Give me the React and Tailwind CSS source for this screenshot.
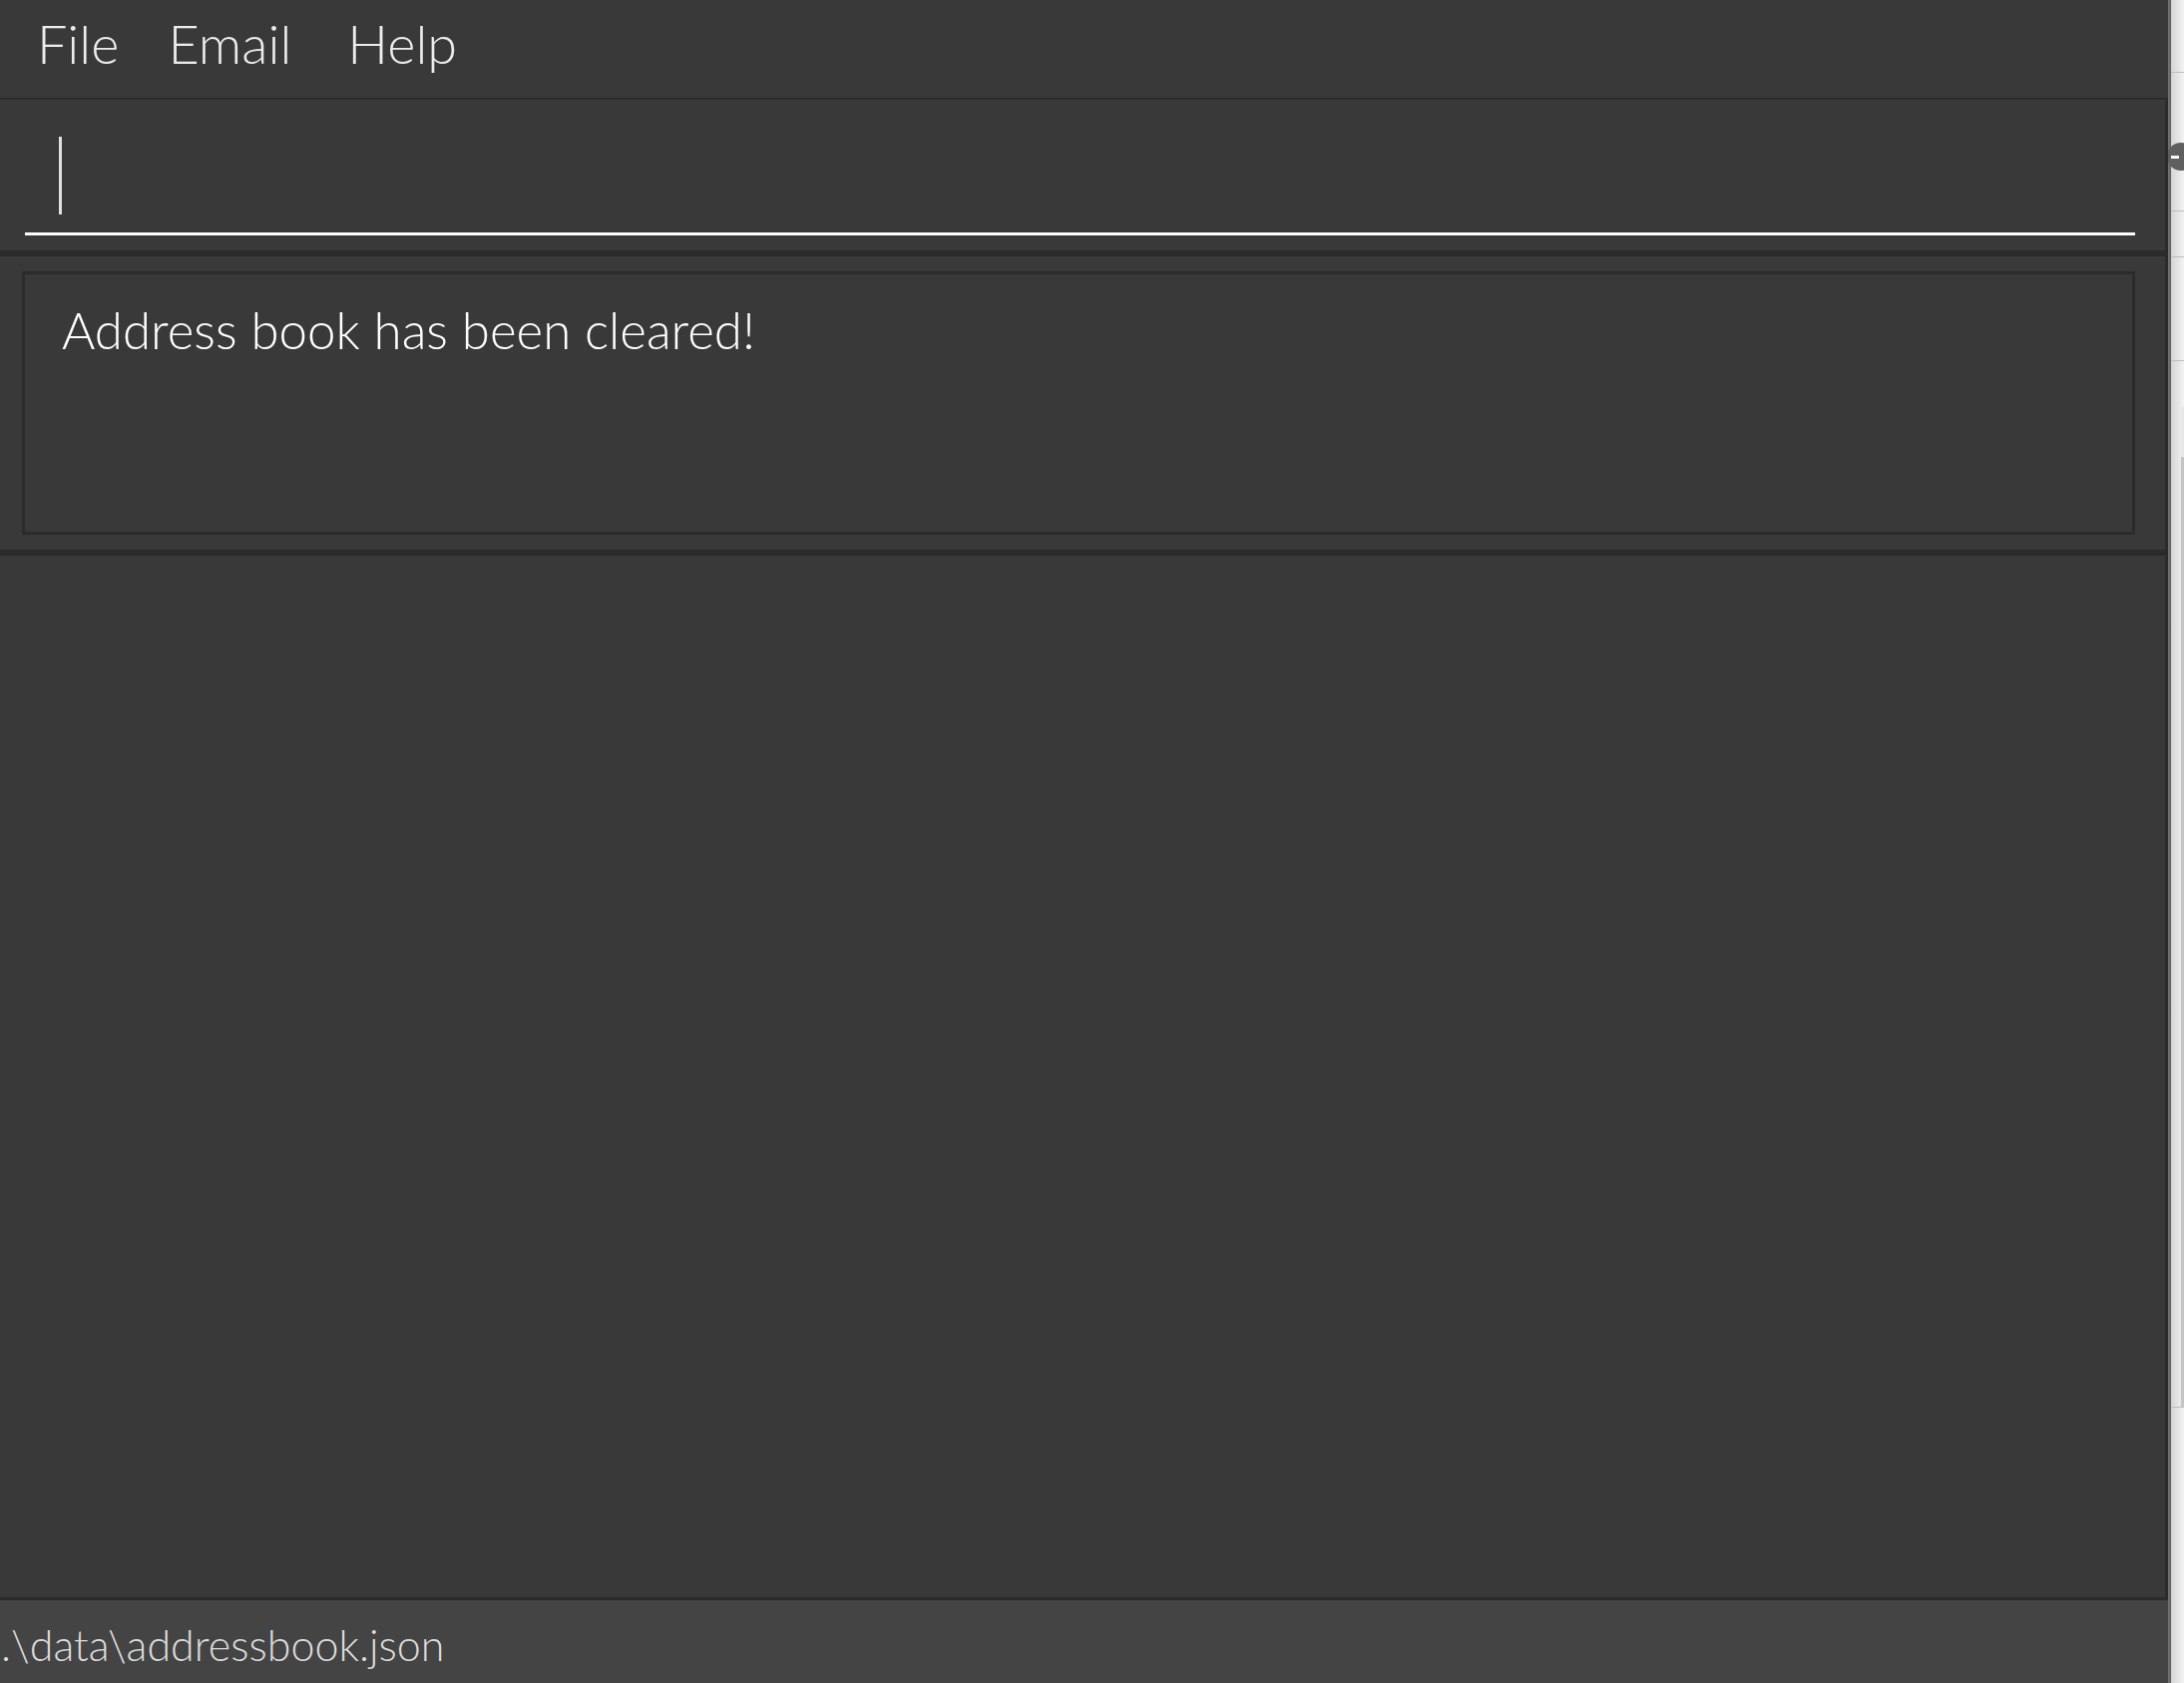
export default function App() {
  const font = { fontFamily: '"Lato", "Open Sans", sans-serif' };
  return (
    <div className="relative flex h-[1687px] w-[2189px] overflow-hidden bg-[#e6e6e6]" style={font}>
      <div className="flex w-[2173px] flex-col bg-[#393939]">
        {/* Menu bar */}
        <div className="flex h-[98px] items-start pl-[37px] pt-[17px] text-[54px] font-light leading-none text-[#ececec]">
          <span>File</span>
          <span className="ml-[49px]">Email</span>
          <span className="ml-[56px]">Help</span>
        </div>
        <div className="h-[2px] bg-[#2b2b2b]" />

        {/* Command box */}
        <div className="flex h-[151px] flex-col border-r-[3px] border-[#2b2b2b] pt-[37px]">
          <div className="ml-[59px] h-[78px] w-[3px] bg-[#e0e0e0]" />
          <div className="ml-[25px] mt-[18px] h-[3px] w-[2115px] bg-white" />
        </div>
        <div className="h-[6px] bg-[#2b2b2b]" />

        {/* Result display */}
        <div className="flex h-[294px] flex-col border-r-[3px] border-[#2b2b2b] pl-[22px] pt-[15px]">
          <div className="h-[264px] w-[2118px] border-[3px] border-[#2b2b2b] pl-[37px] pt-[30px]">
            <span className="text-[51px] font-light leading-none text-white">Address book has been cleared!</span>
          </div>
        </div>
        <div className="h-[6px] bg-[#2b2b2b]" />

        {/* List area */}
        <div className="flex-1 border-r-[3px] border-[#2b2b2b]" />
        <div className="h-[3px] bg-[#2b2b2b]" />

        {/* Status bar */}
        <div className="h-[83px] bg-[#444444] pl-[1px] pt-[23px] text-[43px] font-light leading-none text-[#dcdcdc]">
          .\data\addressbook.json
        </div>
      </div>

      {/* Window edge shadow */}
      <div className="w-[3px] bg-gradient-to-r from-[#7a7a7a] to-[#5c5c5c]" />

      {/* Outside area */}
      <div className="flex flex-1 flex-col bg-gradient-to-r from-[#d4d4d4] to-[#f4f4f4]">
        <div className="h-[73px] border-b border-[#bdbdbd]" />
        <div className="h-[139px] border-b border-[#bdbdbd]" />
        <div className="h-[46px] border-b border-[#bdbdbd]" />
        <div className="h-[104px] border-b border-[#bdbdbd]" />
        <div className="flex h-[1049px] justify-end border-b border-[#bdbdbd] pt-[45px]">
          <div className="flex w-[3px] flex-col">
            <div className="h-[51px] bg-[#e8e8e8]" />
            <div className="flex-1 bg-[#c4c4c4]" />
          </div>
        </div>
        <div className="flex-1" />
      </div>

      {/* Partial circular icon peeking in from the right */}
      <div className="absolute left-[2172px] top-[143px] flex h-[28px] w-[28px] items-center rounded-full bg-[#5f5f5f] pl-[4px]">
        <div className="h-[3px] w-[8px] bg-white" />
      </div>
      <div className="absolute left-[2170px] top-[100px] h-[1501px] w-[3px] bg-[#2b2b2b]" />
    </div>
  );
}
